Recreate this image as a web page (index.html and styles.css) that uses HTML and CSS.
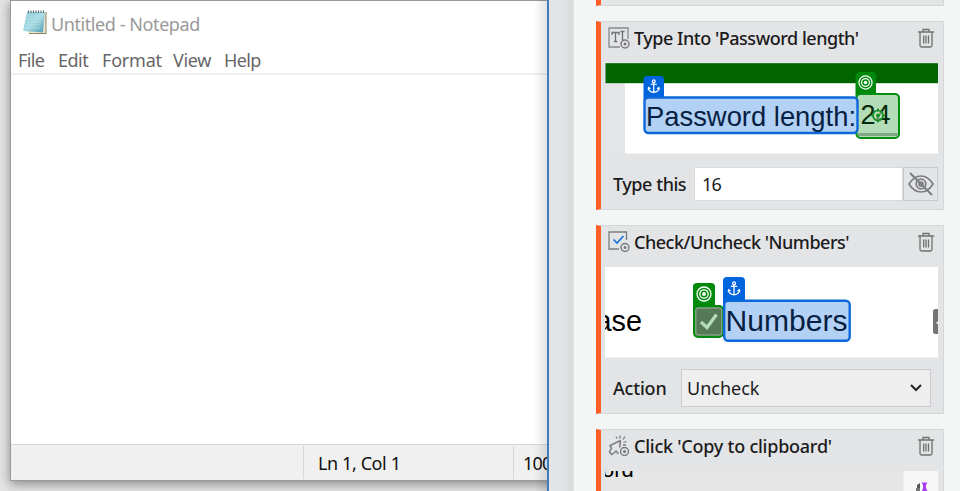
FILE: index.html
```html
<!DOCTYPE html>
<html lang="en">
<head>
<meta charset="utf-8">
<title>Automation recorder</title>
<link rel="stylesheet" href="styles.css">
</head>
<body>
<svg width="0" height="0" class="defs">
  <symbol id="trash" viewBox="0 0 18 20">
    <path d="M1 4h16M6 4V1.500h6V4M3 4v13.500q0 1.500 1.500 1.500h9q1.500 0 1.500-1.500V4M6.700 7.500v8M9 7.500v8M11.500 7.500v8" fill="none" stroke="#707172" stroke-width="1.300"/>
  </symbol>
  <symbol id="anchor" viewBox="0 0 14 16">
    <g fill="none" stroke="#fff" stroke-width="1.300"><circle cx="7" cy="2.500" r="1.500"/><path d="M7 4v10M3.700 5.600h6.600M1.400 9.300c0 3 2 4.500 5.600 5 3.600-.5 5.600-2 5.600-5M1 11.300l.5-2.300 2 1.300M13 11.300l-.5-2.300-2 1.300"/></g>
  </symbol>
  <symbol id="target" viewBox="0 0 16 16">
    <g fill="none" stroke="#fff" stroke-width="1.300"><circle cx="8" cy="8" r="7"/><circle cx="8" cy="8" r="4.200"/></g><circle cx="8" cy="8" r="1.900" fill="#fff"/>
  </symbol>
  <symbol id="gear" viewBox="0 0 10 10">
    <circle cx="5" cy="5" r="4" fill="#e3e4e6" stroke="#77787a" stroke-width="1.400"/><circle cx="5" cy="5" r="1.500" fill="#77787a"/>
  </symbol>
</svg>
<main class="screen">
  <section class="desktop">
    <div class="notepad">
      <header class="titlebar">
        <svg class="app-icon" width="26" height="27" viewBox="0 0 26 27">
          <defs><linearGradient id="page" x1="0" y1="0" x2="1" y2="1"><stop offset="0" stop-color="#8cc9d7"/><stop offset=".5" stop-color="#a7dbe5"/><stop offset="1" stop-color="#4c9aaf"/></linearGradient></defs>
          <path d="M7 3h17.500v22H7z" fill="#8e8060"/>
          <path d="M6 3h17.500v21H6z" fill="#eee7cf"/>
          <path d="M5 3h18l-2 20.500L1 22z" fill="url(#page)"/>
          <path d="M5 7h16M4.500 10h16M4 13h15.500M3.500 16h15M3 19h15" stroke="#c4e8ed" stroke-width=".6"/>
          <path d="M6.500 4V1.500M9 4V1.500M11.500 4V1.500M14 4V1.500M16.500 4V1.500M19 4V1.500M21.500 4V1.500" stroke="#566b72" stroke-width="1.100"/>
        </svg>
        <span class="app-title">Untitled - Notepad</span>
      </header>
      <nav class="menubar"><span class="m-file">File</span><span class="m-edit">Edit</span><span class="m-format">Format</span><span class="m-view">View</span><span class="m-help">Help</span></nav>
      <div class="editor"></div>
      <footer class="statusbar"><span class="st-main"></span><span class="st-pos">Ln 1, Col 1</span><span class="st-zoom">100%</span></footer>
    </div>
    <div class="edge-shade"></div>
  </section>
  <div class="gutter"></div>
  <section class="panel">
    <article class="card card-prev"></article>

    <article class="card card-type">
      <header class="card-head">
        <svg class="kind" width="22" height="22" viewBox="0 0 22 22">
          <path d="M20 12V1H1v19h11" fill="none" stroke="#88898b" stroke-width="1.300"/>
          <path d="M4 8V5.500h7V8M7.500 5.500v9M5.800 14.500h3.500M12.500 4.500h4M14.500 4.500v11.500M12.500 16.300h3" fill="none" stroke="#707173" stroke-width="1.300"/>
          <use href="#gear" x="12" y="12" width="10" height="10"/>
        </svg>
        <h2 class="t-type">Type Into 'Password length'</h2>
        <svg class="trash" width="18" height="20"><use href="#trash"/></svg>
      </header>
      <svg class="thumb" width="333" height="91" viewBox="605 63 333 91">
        <rect x="605" y="63" width="333" height="91" fill="#e4e5e7"/>
        <rect x="625" y="83" width="313" height="70.500" fill="#fff"/>
        <rect x="605.500" y="63.200" width="333" height="20" fill="#006400"/>
        <path d="M855.500 135V76q0-4 4-4h12.500q4 0 4 4v20z" fill="#008a0c"/>
        <rect x="856.500" y="94" width="42.500" height="44" rx="4" fill="#b4dcb6" stroke="#008f12" stroke-width="2"/>
        <rect x="858" y="133" width="39.500" height="3" fill="#7fa582"/>
        <path d="M643.500 100V80q0-4 4-4h12.500q4 0 4 4v20z" fill="#0064dc"/>
        <rect x="644.500" y="97.500" width="213" height="35.500" rx="4" fill="#b3d0f5" stroke="#0d68dc" stroke-width="2.400"/>
        <text x="646" y="125.500" textLength="210" lengthAdjust="spacingAndGlyphs" class="shot label-text dark-blue">Password length:</text>
        <text x="860.500" y="124" textLength="30" lengthAdjust="spacingAndGlyphs" class="shot label-text dark-green">24</text>
        <circle cx="878" cy="115.500" r="5" fill="#b4dcb6" fill-opacity=".6" stroke="#168c22" stroke-width="1.700"/>
        <circle cx="878" cy="115.500" r="1.800" fill="#008a12"/>
        <path d="M878 108.500v3M878 119.500v3M871 115.500h3M882 115.500h3" stroke="#168c22" stroke-width="1.700"/>
        <use href="#anchor" x="647" y="79" width="13.500" height="15"/>
        <use href="#target" x="858" y="75" width="15" height="15"/>
      </svg>
      <div class="field-row">
        <label>Type this</label>
        <div class="text-input">16</div>
        <div class="eye"><svg width="28" height="26" viewBox="0 0 28 26"><g fill="none" stroke="#7c7d7f" stroke-width="1.700"><path d="M2 13Q7 5 14 5t12 8q-5 8-12 8T2 13z"/><circle cx="14" cy="13" r="4.800"/><circle cx="14" cy="13" r="2"/><path d="M3 2l22 22" stroke-width="2"/></g></svg></div>
      </div>
    </article>

    <article class="card card-check">
      <header class="card-head">
        <svg class="kind" width="22" height="22" viewBox="0 0 22 22">
          <path d="M18.500 9V1H1v17h10" fill="none" stroke="#7c7d7f" stroke-width="1.300"/>
          <path d="M5.500 8.500l3.500 3.500 6.500-7" fill="none" stroke="#1672d8" stroke-width="1.600"/>
          <use href="#gear" x="12" y="11.500" width="10" height="10"/>
        </svg>
        <h2 class="t-check">Check/Uncheck 'Numbers'</h2>
        <svg class="trash" width="18" height="20"><use href="#trash"/></svg>
      </header>
      <svg class="thumb" width="333" height="91" viewBox="605 267 333 91">
        <rect x="605" y="267" width="333" height="90.500" fill="#fff"/>
        <text x="595.500" y="331" textLength="46.500" lengthAdjust="spacingAndGlyphs" class="shot">ase</text>
        <path d="M693 330V286.500q0-3.500 4-3.500h14q4 0 4 4v22z" fill="#008a0c"/>
        <rect x="694" y="306" width="29" height="31" rx="4" fill="#51774f" stroke="#008a0c" stroke-width="2"/>
        <rect x="695.800" y="308" width="26" height="27" rx="2" fill="#577a56" stroke="#91b693"/>
        <path d="M701 322l6 5.500 9.500-13" fill="none" stroke="#b4dcb6" stroke-width="3.300"/>
        <path d="M723 305V281q0-4 4-4h14q4 0 4 4v24z" fill="#0064dc"/>
        <rect x="724.200" y="300.700" width="125.500" height="40" rx="4" fill="#b3d0f5" stroke="#0d68dc" stroke-width="2.400"/>
        <text x="725.500" y="331" textLength="122" lengthAdjust="spacingAndGlyphs" class="shot dark-blue">Numbers</text>
        <use href="#target" x="696" y="286" width="16" height="16"/>
        <use href="#anchor" x="727" y="281" width="14" height="15.500"/>
        <rect x="933" y="309" width="10" height="25" rx="2.500" fill="#747474"/>
        <path d="M936 323l1.500-1.500 1 1.500-1 1z" fill="#fff"/>
      </svg>
      <div class="field-row action-row">
        <label>Action</label>
        <div class="select"><span>Uncheck</span><svg width="14" height="10" viewBox="0 0 14 10"><path d="M2 2l5 5 5-5" fill="none" stroke="#242424" stroke-width="2"/></svg></div>
      </div>
    </article>

    <article class="card card-click">
      <header class="card-head">
        <svg class="kind" width="22" height="22" viewBox="0 0 22 22">
          <path d="M12.500 5.500L2 10.500l1.500 2.500L1.500 17l2 2.500 3-2 1.500-1.500 2.500 3M12.500 5.500l-.8 7" fill="none" stroke="#7c7d7f" stroke-width="1.500"/>
          <path d="M12 .5v3M8 1.500l1 2M17 1.500l-2 3M15.500 7.500l3-1M15 10h3" stroke="#7c7d7f" stroke-width="1.300"/>
          <use href="#gear" x="11.500" y="11.500" width="10" height="10"/>
        </svg>
        <h2 class="t-click">Click 'Copy to clipboard'</h2>
        <svg class="trash" width="18" height="20"><use href="#trash"/></svg>
      </header>
      <svg class="thumb" width="333" height="21" viewBox="605 471 333 21">
        <rect x="605" y="470" width="333" height="22" fill="#e6e6e6"/>
        <text x="602" y="477" class="shot small">ord</text>
        <rect x="903.500" y="470.500" width="35" height="22" fill="#f7f7f8"/>
        <path d="M917 485l3-2v8h-3z" fill="#555"/><path d="M916 488h4v3h-4z" fill="#777"/>
        <path d="M921.500 482.500h6l-1.500 2.500v3l1.500 3h-5.500l1-3v-3z" fill="#a83cf2"/>
      </svg>
    </article>
  </section>
</main>
</body>
</html>
```
FILE: styles.css
```css
* { box-sizing: border-box; }
body { margin: 0; overflow: hidden; font-family: "Noto Sans", "Open Sans", sans-serif; font-size: 18px; color: #1b1b1c; }
.defs { position: absolute; }
.screen { display: flex; width: 960px; height: 491px; overflow: hidden; background: #f4f6f6; }

/* Editor window */
.desktop { position: relative; width: 547px; flex: none; padding-left: 10px; background: #e3e3e3; overflow: hidden; }
.notepad { display: flex; flex-direction: column; width: 640px; height: 481px; border: 1px solid #999; background: #fff; box-shadow: 0 3px 10px rgba(0,0,0,.4); }
.titlebar { display: flex; align-items: center; height: 46px; padding-left: 11px; }
.app-icon { margin-top: -4px; }
.app-title { margin-left: 3px; color: #999; letter-spacing: -.42px; }
.menubar { display: flex; height: 28px; flex: none; padding-left: 7px; align-items: center; color: #666; border-bottom: 2px solid #f0f0f0; }
.menubar span { line-height: 24px; white-space: nowrap; }
.m-file { width: 40px; letter-spacing: -.6px; }
.m-edit { width: 44px; letter-spacing: -.5px; }
.m-format { width: 71px; letter-spacing: -.6px; letter-spacing: -.2px; }
.m-view { width: 51px; letter-spacing: -.3px; }
.m-help { letter-spacing: -.6px; }
.editor { flex: 1; }
.statusbar { display: flex; height: 36px; background: #f0f0f0; border-top: 1px solid #d7d7d7; padding: 1px 0; line-height: 35px; color: #111; }
.st-main { width: 293px; border-right: 1px solid #d7d7d7; }
.st-pos { width: 210px; padding-left: 14px; border-right: 1px solid #d7d7d7; letter-spacing: -.4px; }
.st-zoom { padding-left: 9px; letter-spacing: -.8px; }
.edge-shade { position: absolute; right: 0; top: 0; width: 13px; height: 491px; background: linear-gradient(90deg, transparent, rgba(0,0,0,.11)); }

/* Activity panel */
.gutter { width: 27px; flex: none; border-left: 2px solid #3d7ebb; background: linear-gradient(90deg, #e3e4e6 0 12px, #dfe0e2 18px, #d9dadc 22px, #dfe1e2); }
.panel { flex: 1; padding-left: 22px; }
.card { width: 348px; background: #e3e4e6; border: 1px solid #d5d7d9; border-left: 5px solid #ff5f26; padding-left: 4px; }
.card-prev { height: 6px; border-top: 0; }
.card-type, .card-check { height: 189px; margin-top: 15px; }
.card-click { height: 90px; margin-top: 15px; }
.card-head { display: flex; align-items: center; height: 41px; padding: 0 8px 9px 3px; }
.card-head h2 { margin: 0; padding-left: 4px; font-size: 18px; font-weight: 500; line-height: 24px; white-space: nowrap; }
.t-type { letter-spacing: -.47px; }
.t-check { letter-spacing: -.48px; }
.t-click { letter-spacing: -.24px; }
.trash { margin-left: auto; }
.thumb { display: block; overflow: hidden; }
.shot { font-family: "Liberation Sans", sans-serif; font-size: 29px; fill: #000; }
.label-text { font-size: 28px; }
.small { font-size: 22px; }
.dark-blue { fill: #061f42; }
.dark-green { fill: #052b0b; }
.field-row { display: flex; align-items: center; padding: 13px 0 0 8px; }
.field-row label { width: 81px; font-weight: 500; letter-spacing: -.45px; white-space: nowrap; }
.text-input { width: 209px; height: 34px; line-height: 32px; padding-left: 7px; background: #fff; border: 1px solid #d9dadc; letter-spacing: -.8px; }
.eye { display: flex; align-items: center; justify-content: center; width: 35px; height: 34px; border: 1px solid #c9cbcd; }
.action-row { padding-top: 11px; }
.action-row label { width: 68px; letter-spacing: -.2px; }
.select { display: flex; align-items: center; justify-content: space-between; width: 250px; height: 38px; padding: 0 7px 0 5px; background: #eeeeef; border: 1px solid #cbcccf; }
```
